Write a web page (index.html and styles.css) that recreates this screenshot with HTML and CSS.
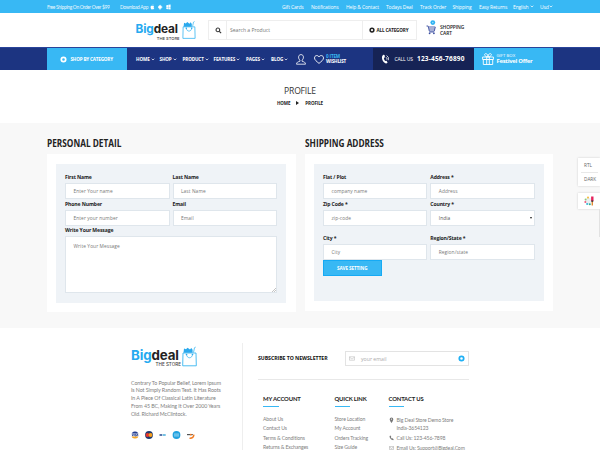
FILE: index.html
```
<!DOCTYPE html>
<html lang="en">
<head>
<meta charset="utf-8">
<title>Bigdeal - Profile</title>
<link rel="stylesheet" href="styles.css">
</head>
<body>
<svg class="defs" aria-hidden="true">
  <symbol id="bag" viewBox="0 0 15 20"><path d="M1 6.500h13l.3 12.800H.7z" fill="none" stroke="#38b6f1" stroke-width=".9"/><path d="M1.500 6.300l.5-4.300 2 .8 1.600-1.600L8 3l1.300-1.500 1.300 1.800v3z" fill="#2ba9ed"/><path d="M11.500 6l1-4.800 1.200-.6M4.500 7.500c0 5 6 5 6 0" fill="none" stroke="#38b6f1" stroke-width=".8"/><circle cx="4.500" cy="8" r=".8" fill="#2ba9ed"/><circle cx="10.500" cy="8" r=".8" fill="#2ba9ed"/></symbol>
  <symbol id="down" viewBox="0 0 6 4"><path d="M1 .8l2 2 2-2" fill="none" stroke="currentColor" stroke-width="1.100"/></symbol>
  <symbol id="ring" viewBox="0 0 8 8"><circle cx="4" cy="4" r="2.500" fill="none" stroke="currentColor" stroke-width="2"/></symbol>
  <symbol id="mail" viewBox="0 0 8 6"><path d="M.7.7h6.600v4.600H.7zM.7 1.200L4 3.800l3.300-2.600" fill="none" stroke="currentColor" stroke-width=".6"/></symbol>
</svg>

<div class="topbar">
  <span class="ship">Free Shipping On Order Over $99</span>
  <span class="app">Download App</span>
  <svg class="stores" viewBox="0 0 21 6" fill="#fff"><path d="M2.400 1.500C2.400.8 2.800.4 3.300.3c0 .6-.4 1.100-.9 1.200zM.6 3.200c0-1.300 1-1.700 1.800-1.300.7-.3 1.300-.2 1.700.3-.8.5-.6 1.500.2 1.800-.4 1.100-1 1.800-1.900 1.300C1.300 5.800.6 4.500.6 3.200z"/><path d="M8.700 1.800h2.800v2.700H8.700zM8 2.200h.5v1.700H8zM11.700 2.200h.5v1.700h-.5zM9 1.500q1.100-1.500 2.200 0zM9.300 4.500h.6v1.100h-.6zM10.400 4.500h.6v1.100h-.6z"/><path d="M16.300 1.200l1.800-.3v2h-1.800zM18.400.8l2.200-.3v2.400h-2.200zM16.300 3.200h1.800v2l-1.800-.2zM18.400 3.200h2.200v2.300l-2.200-.3z"/></svg>
  <nav class="toplinks">
    <span>Gift Cards</span><span>Notifications</span><span>Help &amp; Contact</span><span>Todays Deal</span><span>Track Order</span><span>Shipping</span><span>Easy Returns</span><span class="pick">English<svg><use href="#down"/></svg></span><span class="pick">Usd<svg><use href="#down"/></svg></span>
  </nav>
</div>

<header class="header">
  <div class="logo"><div class="words"><div class="name"><b>Big</b>deal</div><div class="sub">THE STORE</div></div><svg class="bag"><use href="#bag"/></svg></div>
  <div class="search">
    <div class="mag"><svg viewBox="0 0 8 8"><circle cx="3.300" cy="3.300" r="2.100" fill="none" stroke="#333" stroke-width="1.200"/><path d="M4.900 4.900l2.100 2.100" stroke="#333" stroke-width="1.300"/></svg></div>
    <div class="term">Search a Product</div>
    <div class="cat"><svg><use href="#ring"/></svg><span>ALL CATEGORY</span></div>
  </div>
  <div class="cart">
    <svg viewBox="0 0 10 15"><path d="M.5 6h1.600l1.200 5h5L9.300 7H2.600M3 9h6M3.300 12h5" fill="none" stroke="#3c4fa0" stroke-width=".9"/><circle cx="3.600" cy="13.300" r=".9" fill="#3c4fa0"/><circle cx="7.900" cy="13.300" r=".9" fill="#3c4fa0"/><circle cx="6.800" cy="2.600" r="2.400" fill="#2eb2f2"/><circle cx="6.800" cy="2.600" r=".8" fill="#9bdcfa"/></svg>
    <div>SHOPPING<br>CART</div>
  </div>
</header>

<div class="mainnav">
  <div class="shopcat"><svg><use href="#ring"/></svg><span>SHOP BY CATEGORY</span></div>
  <div class="menu">
    <span>HOME<svg><use href="#down"/></svg></span><span>SHOP<svg><use href="#down"/></svg></span><span>PRODUCT<svg><use href="#down"/></svg></span><span>FEATURES<svg><use href="#down"/></svg></span><span>PAGES<svg><use href="#down"/></svg></span><span>BLOG<svg><use href="#down"/></svg></span>
  </div>
  <svg class="user" viewBox="0 0 10 11" fill="none" stroke="#fff" stroke-width=".8"><path d="M5 .6c3.300 0 2.800 4.600 1 5.600v1c1.800.6 3.400.8 3.500 3H.5c.1-2.200 1.700-2.400 3.500-3v-1C2.200 5.200 1.700.6 5 .6z"/></svg>
  <svg class="heart" viewBox="0 0 10 9" fill="none" stroke="#fff" stroke-width=".9"><path d="M5 8.400C2.500 6.300.5 4.900.5 2.900.5.300 3.900-.3 5 2 6.100-.3 9.500.3 9.500 2.900c0 2-2 3.400-4.500 5.500z"/></svg>
  <div class="wish"><em>0 ITEM</em><br>WISHLIST</div>
  <div class="call"><svg viewBox="0 0 9 10"><path d="M2.200.8L3.600 1l.3 2.200-1 .8c.1 1.300.6 2.200 1.400 3l1.200-.3 1.100 1.700c-.6 1-1.600 1.300-2.700.7C1.200 7.500-.2 3 2.200.8z" fill="#fff"/><path d="M5 3.200q1.300.8.8 2.400M5.600 1.500q2.700 1.600 1.700 4.700" fill="none" stroke="#fff" stroke-width=".8"/></svg><span class="us">CALL US</span><span class="num">123-456-76890</span></div>
  <div class="gift"><svg viewBox="0 0 12 12" fill="none" stroke="#fff" stroke-width=".9"><path d="M.6 4h10.800v2.500H.6zM1.300 6.500h9.400v5H1.300zM4.700 4v7.500M7.300 4v7.500M6 4C2 3.500 2 .6 3.700.6S6 2.500 6 4c0-1.500.6-3.400 2.300-3.400S10 3.500 6 4z"/></svg><div><span class="gb">GIFT BOX</span><span class="fo">Festivel Offer</span></div></div>
</div>

<section class="crumbs">
  <h2>PROFILE</h2>
  <div class="trail"><span>HOME</span><i></i><span>PROFILE</span></div>
</section>

<main class="profile">
  <section class="left">
    <h3>PERSONAL DETAIL</h3>
    <div class="card"><div class="form">
      <div class="row">
        <div class="field"><label>First Name</label><div class="input">Enter Your name</div></div>
        <div class="field"><label>Last Name</label><div class="input">Last Name</div></div>
      </div>
      <div class="row">
        <div class="field"><label>Phone Number</label><div class="input">Enter your number</div></div>
        <div class="field"><label>Email</label><div class="input">Email</div></div>
      </div>
      <div class="field"><label>Write Your Message</label><div class="input area">Write Your Message<svg class="grip" viewBox="0 0 4 4"><path d="M0 4l4-4M2 4l2-2" stroke="#888" stroke-width=".5"/></svg></div></div>
    </div></div>
  </section>
  <section class="right">
    <h3>SHIPPING ADDRESS</h3>
    <div class="card"><div class="form">
      <div class="row">
        <div class="field"><label>Flat / Plot</label><div class="input">company name</div></div>
        <div class="field"><label>Address *</label><div class="input">Address</div></div>
      </div>
      <div class="row gapafter">
        <div class="field"><label>Zip Code *</label><div class="input">zip-code</div></div>
        <div class="field"><label>Country *</label><div class="input select">India<i></i></div></div>
      </div>
      <div class="row last">
        <div class="field"><label>City *</label><div class="input">City</div></div>
        <div class="field"><label>Region/State *</label><div class="input">Region/state</div></div>
      </div>
      <div class="save">SAVE SETTING</div>
    </div></div>
  </section>
</main>

<footer class="footer">
  <div class="about">
    <div class="logo big"><div class="words"><div class="name"><b>Big</b>deal</div><div class="sub">THE STORE</div></div><svg class="bag"><use href="#bag"/></svg></div>
    <p>Contrary To Popular Belief, Lorem Ipsum<br>Is Not Simply Random Text. It Has Roots<br>In A Piece Of Classical Latin Literature<br>From 45 BC, Making It Over 2000 Years<br>Old. Richard McClintock.</p>
    <svg class="pay" viewBox="0 0 64 8"><clipPath id="vc"><circle cx="4" cy="4" r="3.500"/></clipPath><g clip-path="url(#vc)"><path d="M0 0h8v8H0z" fill="#e8ebf5"/><path d="M0 0h8v2.600H0z" fill="#233d90"/><path d="M0 5.500h8v2.600H0z" fill="#f5a623"/><path d="M1 3l.7 2 .7-2M3.300 3v2M5.500 3.200H4.300v.8h1v.9H4M6 5l.6-2 .7 2" stroke="#233d90" stroke-width=".7" fill="none"/></g><circle cx="18" cy="4" r="3.900" fill="#203a70"/><circle cx="16.500" cy="4" r="1.900" fill="#e8352c"/><circle cx="19.500" cy="4" r="1.900" fill="#f79f1a"/><path d="M28.500 4h2.700" stroke="#24478c" stroke-width="1.500"/><path d="M31.700 4h3" stroke="#2b9fd4" stroke-width="1.300"/><circle cx="45.500" cy="4" r="3.900" fill="#20a1df"/><path d="M43 3.100h5M43 4.900h5" stroke="#b7e3f6" stroke-width=".8"/><path d="M56 3.600h5.800" stroke="#555" stroke-width="1.200"/><circle cx="59.800" cy="3.600" r=".9" fill="#f47b20"/><path d="M58.500 7.200q4 .3 4.500-3.600" stroke="#f47b20" stroke-width="1.400" fill="none"/></svg>
  </div>
  <div class="info">
    <div class="news">
      <span>SUBSCRIBE TO NEWSLETTER</span>
      <div class="email"><svg class="env"><use href="#mail"/></svg><span>your email</span><svg class="go"><use href="#ring"/></svg></div>
    </div>
    <div class="cols">
      <div class="col"><h4>MY ACCOUNT</h4><a>About Us</a><a>Contact Us</a><a>Terms &amp; Conditions</a><a>Returns &amp; Exchanges</a></div>
      <div class="col"><h4>QUICK LINK</h4><a>Store Location</a><a>My Account</a><a>Orders Tracking</a><a>Size Guide</a></div>
      <div class="col contact"><h4>CONTACT US</h4>
        <div class="addr"><svg viewBox="0 0 5 6"><path d="M2.500 6C1 3.800.7 3 .7 2.200a1.800 1.800 0 013.600 0C4.300 3 4 3.800 2.500 6z" fill="#777"/><circle cx="2.500" cy="2.100" r=".6" fill="#fff"/></svg><span>Big Deal Store Demo Store<br>India-3654123</span></div>
        <div><svg viewBox="0 0 5 6"><path d="M.6 1l1-.4.7 1.300-.5.6 1 1.100.7-.3 1.200.9-.5 1C2.500 5.200.3 3 .6 1z" fill="#777"/></svg><span>Call Us: 123-456-7898</span></div>
        <div><svg class="m"><use href="#mail"/></svg><span>Email Us: Support@Bigdeal.Com</span></div>
      </div>
    </div>
  </div>
</footer>

<aside class="tools">
  <div class="modes"><span>RTL</span><span>DARK</span></div>
  <div class="palette"><svg viewBox="0 0 10 10"><circle cx="4.500" cy="5" r="3.200" fill="#e9eef2"/><circle cx="4" cy="1.600" r="1.100" fill="#f5c04a"/><circle cx="1.600" cy="3.500" r="1" fill="#8fc97c"/><circle cx="1.300" cy="6" r="1" fill="#ed5b7c"/><circle cx="3.200" cy="8" r="1.100" fill="#3bb7d9"/><circle cx="5.800" cy="8.200" r="1" fill="#2aaf91"/><path d="M8.300.5V5" stroke="#e5235c" stroke-width="2.400"/><path d="M8.300 5v4.500" stroke="#e08a35" stroke-width="1.400"/><path d="M8.300 4.500v1.300" stroke="#333" stroke-width="2"/></svg></div>
  <div class="edge"></div>
</aside>
</body>
</html>
```
FILE: styles.css
```
* { box-sizing: border-box; }
body { margin: 0; width: 600px; height: 450px; overflow: hidden; background: #fff; color: #222; font: 5px/8px "Open Sans", sans-serif; position: relative; }
svg { display: block; flex: none; }
.defs { position: absolute; width: 0; height: 0; }
h2, h3, h4, p { margin: 0; }

.topbar { height: 13px; background: #38b8f4; color: #fff; padding-left: 47px; display: flex; align-items: center; }
.ship, .app { font: 4.900px/8px Lato, sans-serif; white-space: nowrap; letter-spacing: -.32px; opacity: .9; }
.ship { width: 73px; }
.app { width: 30px; }
.stores { width: 21px; height: 6px; }
.toplinks { margin-left: 111px; display: grid; grid-template-columns: 29px 35px 40px 34px 32.500px 26.500px 34px 27px 20px; font-size: 5px; letter-spacing: -.15px; white-space: nowrap; }
.pick { display: flex; align-items: center; justify-content: space-between; width: 21px; }
.pick + .pick { width: 13px; }
.pick svg { width: 4px; height: 3px; }

.header { height: 34px; padding-left: 135.500px; display: flex; }
.logo { display: flex; margin-top: 8px; width: 72.500px; }
.words { width: 45px; }
.name { font: 700 11.800px/11px Inter, sans-serif; letter-spacing: -.1px; color: #222; padding-top: 2.500px; }
.name b { font-weight: 700; color: #26aaf0; }
.sub { font: 500 4.100px/5px Inter, sans-serif; text-align: right; padding-right: 1px; margin-top: 1px; color: #444; }
.bag { width: 14px; height: 18px; margin-left: 1px; }
.search { margin-top: 7px; width: 209px; height: 20px; border: 1px solid #eee; display: flex; align-items: center; }
.mag { width: 18px; height: 18px; border-right: 1px solid #eee; padding: 6px 0 0 6px; }
.mag svg { width: 7px; height: 7px; }
.term { width: 134.500px; padding-left: 3px; color: #777; font-size: 5.100px; letter-spacing: -.02px; }
.cat { height: 18px; flex: 1; border-left: 1px solid #eee; display: flex; align-items: center; padding-left: 6px; gap: 2px; font-weight: 700; font-size: 4.600px; letter-spacing: -.16px; white-space: nowrap; }
.cat svg { width: 6px; height: 6px; }
.cart { display: flex; padding: 7px 0 0 9px; gap: 4px; font-weight: 600; font-size: 4.900px; line-height: 6px; letter-spacing: -.1px; }
.cart svg { width: 10px; height: 15px; }
.cart div { padding-top: 4px; }

.mainnav { height: 23px; background: #1c3481; color: #fff; display: flex; align-items: center; padding-left: 47px; font-weight: 700; font-size: 4.600px; border-top: 1px solid #29449a; }
.shopcat { width: 80px; height: 22px; background: #38b8f4; display: flex; align-items: center; padding-left: 12.500px; gap: 4px; white-space: nowrap; letter-spacing: -.17px; }
.shopcat svg { width: 7px; height: 7px; }
.menu { margin-left: 9px; width: 160px; display: grid; grid-template-columns: 23.500px 23px 31px 32.500px 25px 25px; letter-spacing: -.12px; white-space: nowrap; }
.menu span { display: flex; align-items: center; gap: 1.200px; }
.menu svg { width: 4px; height: 3px; margin-top: 1px; }
.user { width: 10px; height: 11px; }
.heart { width: 10px; height: 9px; margin-left: 8px; }
.wish { margin-left: 2px; width: 47px; font-size: 4.600px; line-height: 5px; letter-spacing: -.15px; }
.wish em { font-style: normal; color: #38b8f4; }
.call { width: 101px; height: 22px; background: #162355; display: flex; align-items: center; padding-left: 8px; white-space: nowrap; }
.call svg { width: 9px; height: 10px; }
.us { font-weight: 400; font-size: 5px; letter-spacing: -.1px; width: 22.500px; margin-left: 4.500px; }
.num { font-size: 6.500px; letter-spacing: .2px; }
.gift { width: 79px; height: 22px; background: #38b8f4; display: flex; align-items: center; padding-left: 8px; gap: 2.500px; white-space: nowrap; }
.gift svg { width: 12px; height: 12px; }
.gift span { display: block; }
.gb { font-weight: 400; font-size: 4.300px; line-height: 5px; }
.fo { font-size: 5.900px; line-height: 7px; letter-spacing: -.26px; }

.crumbs { height: 53px; padding-top: 15px; }
.crumbs h2 { font-weight: 400; font-size: 8.600px; line-height: 12px; letter-spacing: -.2px; text-align: center; color: #333; }
.trail { display: flex; align-items: center; justify-content: center; gap: 6px; margin-top: 2px; font-weight: 700; font-size: 4.500px; line-height: 8px; letter-spacing: -.1px; }
.trail i { border: 2px solid transparent; border-left: 3px solid #222; border-right: 0; }

.profile { height: 205px; background: #f8f8f8; padding: 13.500px 0 0 47px; display: flex; gap: 9px; }
.left, .right { width: 248.500px; }
.profile h3 { font-size: 9.800px; line-height: 14px; white-space: nowrap; transform: scaleX(.845); transform-origin: left; color: #222; }
.card { background: #fff; margin-top: 3.500px; padding: 9.500px 9.500px 9.500px 9px; height: 158px; }
.right .card { height: 157px; }
.form { background: #eff3f7; height: 139px; padding: 9.500px 9px; }
.right .form { height: 137.500px; padding: 9.500px 9px 9.500px 9.500px; }
.row { display: flex; gap: 3px; }
.field { flex: 1; height: 26.700px; }
.field label { display: block; font-weight: 700; font-size: 5.100px; line-height: 8px; height: 10px; letter-spacing: -.12px; white-space: nowrap; }
.input { height: 16px; border: 1px solid #dfe6ec; background: #fff; color: #777; font-size: 4.800px; letter-spacing: .1px; line-height: 15px; padding-left: 7.500px; position: relative; white-space: nowrap; }
.area { height: 57px; line-height: 19px; }
.grip { position: absolute; right: 0; bottom: 0; width: 4px; height: 4px; }
.gapafter { margin-bottom: 7.500px; }
.select { color: #555; }
.select i { position: absolute; right: 2px; top: 6px; border: 1px solid transparent; border-top: 2px solid #222; border-bottom: 0; }
.last .field { height: 26px; }
.save { width: 58.500px; height: 16px; background: #38b8f4; border: 1px solid #16aaf4; color: #fff; font-weight: 700; font-size: 4.600px; line-height: 14px; text-align: center; letter-spacing: -.1px; }

.footer { display: flex; padding: 15px 0 0 131px; font-family: Lato, sans-serif; color: #808080; }
.about { width: 112px; height: 107px; border-right: 1px solid #eee; padding-top: 3px; }
.big { margin-top: 0; }
.big .words { width: 50px; }
.big .name { font-size: 13.300px; line-height: 12px; letter-spacing: -.1px; padding-top: 3px; }
.big .sub { font-size: 4.600px; line-height: 5px; padding-right: 0; margin-top: 1px; }
.big .bag { width: 15px; height: 21px; }
.about p { font-size: 5.300px; line-height: 7.850px; letter-spacing: -.08px; margin-top: 12.500px; white-space: nowrap; }
.pay { width: 64px; height: 8px; margin-top: 12px; }
.info { width: 211px; margin-left: 15px; }
.news { height: 37px; display: flex; padding-top: 8px; border-bottom: 1px solid #e8e8e8; color: #111; }
.news > span { width: 87px; font: 700 5.200px/15px "Open Sans", sans-serif; letter-spacing: -.06px; white-space: nowrap; }
.email { width: 124px; height: 15px; border: 1px solid #e3e3e3; display: flex; align-items: center; color: #aaa; font: 5.200px/8px "Open Sans", sans-serif; padding: 0 3px; }
.env { width: 6px; height: 5px; }
.email span { margin-left: 6px; flex: 1; }
.go { color: #1fb0f5; width: 7px; height: 7px; }
.cols { display: grid; grid-template-columns: 71.500px 54px 90px; padding: 15px 0 0 5px; }
.col h4 { font-size: 5.900px; line-height: 8px; letter-spacing: -.15px; color: #222; height: 13px; white-space: nowrap; margin-bottom: 6.500px; }
.col h4::after { content: ""; display: block; width: 15.500px; height: 1px; margin-top: 3px; background: #38b8f4; }
.col a { display: block; font-size: 5.100px; line-height: 9.600px; letter-spacing: -.1px; white-space: nowrap; }
.contact > div { display: flex; gap: 3px; font-size: 5.100px; line-height: 8px; height: 10px; letter-spacing: -.12px; white-space: nowrap; }
.contact > .addr { height: 19px; padding-top: 1px; }
.contact svg { width: 5px; height: 6px; margin-top: 1px; }
.contact svg.m { height: 4px; margin-top: 2px; }

.tools { position: absolute; right: 0; top: 158px; width: 22px; font-size: 4.700px; color: #666; }
.modes, .palette { background: #fff; box-shadow: 0 0 2px #ccc; }
.modes { height: 28px; padding: 1px 2px 0 3px; }
.modes span { display: block; line-height: 13px; padding-left: 3px; }
.modes span + span { border-top: 1px solid #e8e8e8; }
.palette { margin-top: 7px; height: 16px; padding: 3px 6px; }
.palette svg { width: 10px; height: 10px; }
.edge { height: 28px; width: 1px; margin-left: 21px; background: #e2e2e2; }
```
